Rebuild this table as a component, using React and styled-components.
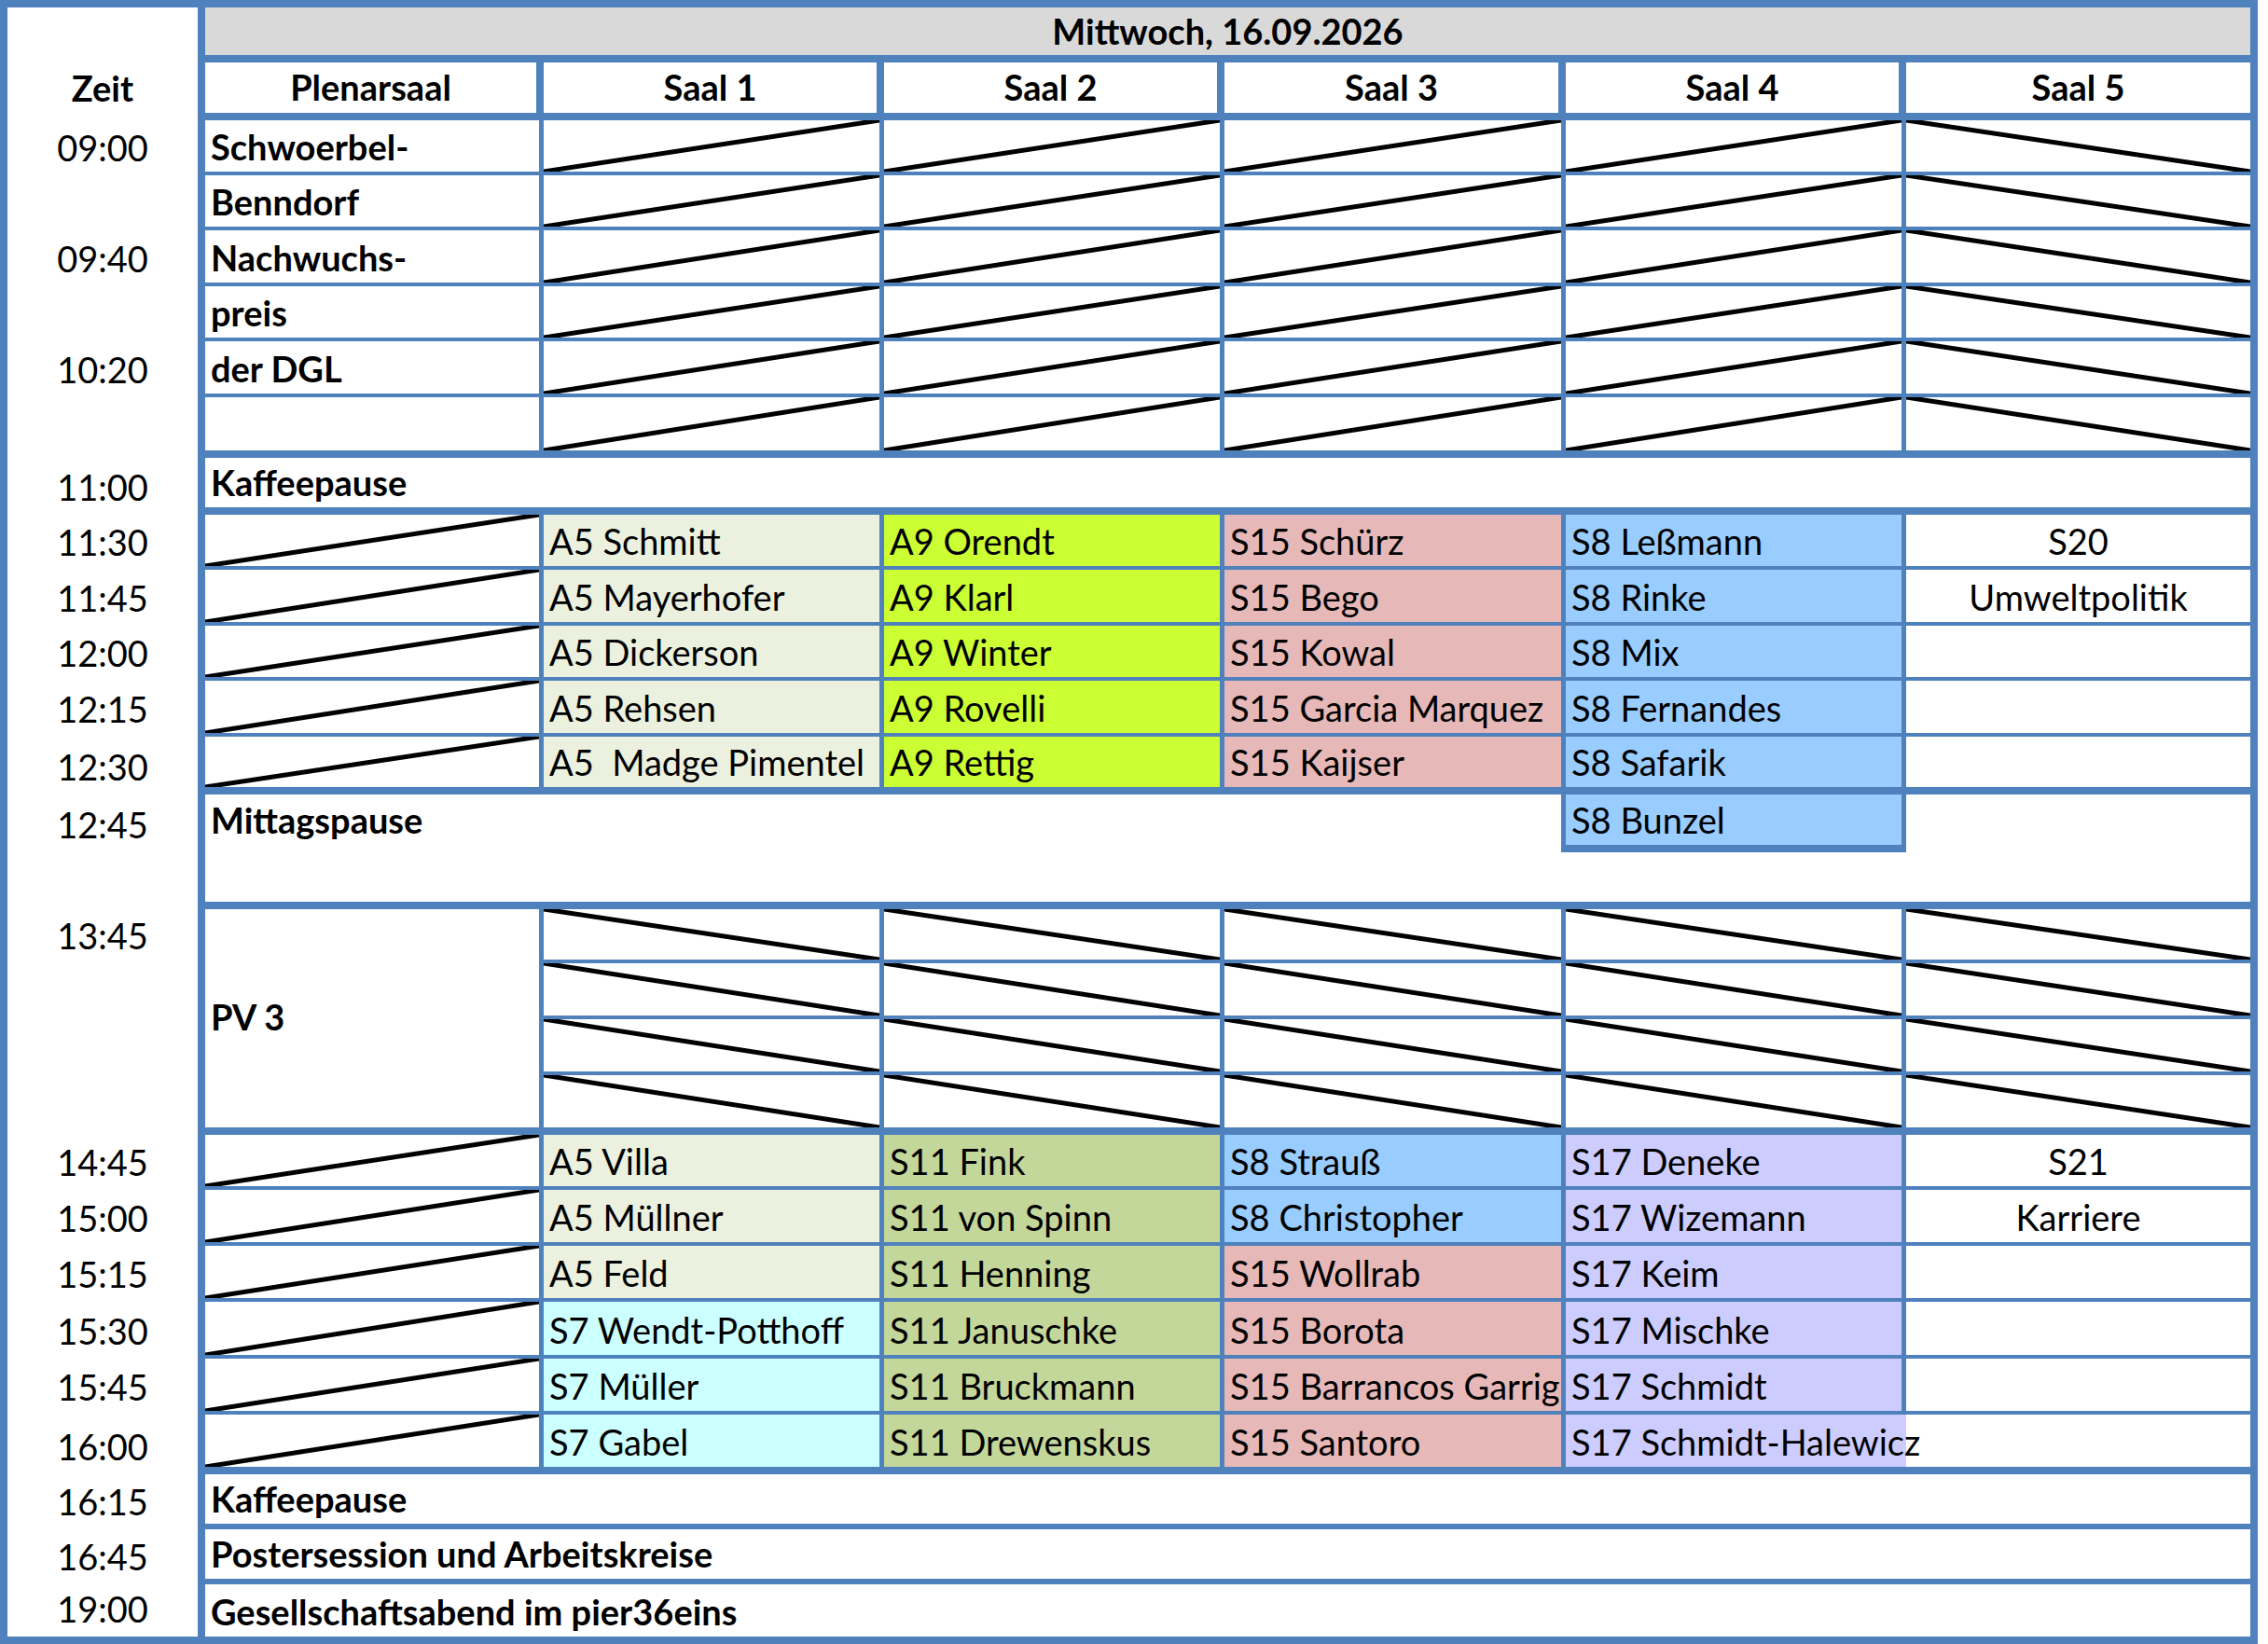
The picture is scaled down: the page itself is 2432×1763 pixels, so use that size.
import React from "react";
import styled, { createGlobalStyle, css } from "styled-components";

const BLUE = "#4f81bd";
const THIN = 4;
const THICK = 8;
const COL_LINE = 5;

const COLORS = {
  A5: "#ebf1de",
  A9: "#ccff33",
  S15: "#e6b8b7",
  S8: "#99ccff",
  S11: "#c4d79b",
  S7: "#ccffff",
  S17: "#ccccff",
};

// heights of the 29 sheet rows, borders included
const ROW_HEIGHTS = [
  59, 62, 59, 59, 60, 59, 60, 65, 61, 59, 60, 59, 60, 62, 62, 61, 58, 60, 60, 64,
  59, 60, 60, 61, 60, 64, 59, 59, 56,
];

const THICK_ROWS = [1, 2, 8, 9, 14, 16, 20, 26];

const bottomFor = (r) => {
  if (r === 29) return 0;
  if (r === 27 || r === 28) return 6;
  return THICK_ROWS.includes(r) ? THICK : THIN;
};

const TIMES = {
  2: "Zeit",
  3: "09:00",
  5: "09:40",
  7: "10:20",
  9: "11:00",
  10: "11:30",
  11: "11:45",
  12: "12:00",
  13: "12:15",
  14: "12:30",
  15: "12:45",
  17: "13:45",
  21: "14:45",
  22: "15:00",
  23: "15:15",
  24: "15:30",
  25: "15:45",
  26: "16:00",
  27: "16:15",
  28: "16:45",
  29: "19:00",
};

const ROOMS = ["Plenarsaal", "Saal 1", "Saal 2", "Saal 3", "Saal 4", "Saal 5"];

const PLENUM_MORNING = ["Schwoerbel-", "Benndorf", "Nachwuchs-", "preis", "der DGL", ""];

// session blocks: one array per room column (Saal 1 - Saal 4)
const MIDDAY = [
  [["A5", "A5 Schmitt"], ["A5", "A5 Mayerhofer"], ["A5", "A5 Dickerson"], ["A5", "A5 Rehsen"], ["A5", "A5  Madge Pimentel"]],
  [["A9", "A9 Orendt"], ["A9", "A9 Klarl"], ["A9", "A9 Winter"], ["A9", "A9 Rovelli"], ["A9", "A9 Rettig"]],
  [["S15", "S15 Schürz"], ["S15", "S15 Bego"], ["S15", "S15 Kowal"], ["S15", "S15 Garcia Marquez"], ["S15", "S15 Kaijser"]],
  [["S8", "S8 Leßmann"], ["S8", "S8 Rinke"], ["S8", "S8 Mix"], ["S8", "S8 Fernandes"], ["S8", "S8 Safarik"]],
];
const MIDDAY_SAAL5 = ["S20", "Umweltpolitik", "", "", ""];

const AFTERNOON = [
  [["A5", "A5 Villa"], ["A5", "A5 Müllner"], ["A5", "A5 Feld"], ["S7", "S7 Wendt-Potthoff"], ["S7", "S7 Müller"], ["S7", "S7 Gabel"]],
  [["S11", "S11 Fink"], ["S11", "S11 von Spinn"], ["S11", "S11 Henning"], ["S11", "S11 Januschke"], ["S11", "S11 Bruckmann"], ["S11", "S11 Drewenskus"]],
  [["S8", "S8 Strauß"], ["S8", "S8 Christopher"], ["S15", "S15 Wollrab"], ["S15", "S15 Borota"], ["S15", "S15 Barrancos Garrig"], ["S15", "S15 Santoro"]],
  [["S17", "S17 Deneke"], ["S17", "S17 Wizemann"], ["S17", "S17 Keim"], ["S17", "S17 Mischke"], ["S17", "S17 Schmidt"], ["S17", "S17 Schmidt-Halewicz"]],
];
const AFTERNOON_SAAL5 = ["S21", "Karriere", "", "", "", ""];

const GlobalStyle = createGlobalStyle`
  html, body {
    margin: 0;
    padding: 0;
    background: #fff;
    overflow: hidden;
  }
`;

const Sheet = styled.div`
  box-sizing: border-box;
  width: 2421px;
  height: 1763px;
  border: ${THICK}px solid ${BLUE};
  display: grid;
  grid-template-columns: 212px 363px 365px 365px 366px 365px 369px;
  grid-template-rows: ${ROW_HEIGHTS.map((h) => `${h}px`).join(" ")};
  background: #fff;
  color: #000;
  font-family: Lato, "Open Sans", sans-serif;
  font-size: 38px;
  line-height: 1.2;
`;

const slashLine = (dir) => css`
  background-image: linear-gradient(
    ${dir === "up" ? "to bottom right" : "to top right"},
    transparent calc(50% - 3px),
    #000 calc(50% - 2px),
    #000 calc(50% + 2px),
    transparent calc(50% + 3px)
  );
  background-repeat: no-repeat;
`;

const Cell = styled.div`
  box-sizing: border-box;
  min-width: 0;
  grid-row: ${(p) => p.$r} / span ${(p) => p.$rs || 1};
  grid-column: ${(p) => p.$c} / span ${(p) => p.$cs || 1};
  display: flex;
  align-items: ${(p) => (p.$middle ? "center" : "flex-end")};
  justify-content: ${(p) => (p.$center ? "center" : "flex-start")};
  padding: 0 0 3px ${(p) => (p.$center ? 0 : 6)}px;
  border-style: solid;
  border-color: ${BLUE};
  border-width: 0 ${(p) => (p.$open ? 0 : p.$right ?? COL_LINE)}px ${(p) => p.$bottom ?? THIN}px 0;
  background-color: ${(p) => p.$bg || "transparent"};
  background-clip: padding-box;
  font-weight: ${(p) => (p.$bold ? 700 : 400)};
  white-space: pre;
  overflow: ${(p) => (p.$open ? "visible" : "hidden")};
  ${(p) => p.$slash && slashLine(p.$slash)}
`;

const TimeCell = styled(Cell).attrs({ $c: 1, $right: THICK, $bottom: 0, $center: true })`
  padding-bottom: 6px;
`;

const HeadCell = styled(Cell).attrs({ $bold: true, $center: true, $middle: true, $bottom: THICK })`
  padding-bottom: 0;
`;

const DateCell = styled(HeadCell)`
  background-color: #d9d9d9;
`;

const BreakCell = styled(Cell).attrs({ $c: 2, $cs: 6, $right: 0, $bold: true })``;

// the lunch label shares its row with the boxed "S8 Bunzel" cell but has no bottom line
const LunchCell = styled(Cell).attrs({ $c: 2, $cs: 4, $bottom: 0, $bold: true })`
  padding-bottom: ${3 + THICK}px;
`;

function sessionBlock(startRow, columns, saal5) {
  const cells = [];
  saal5.forEach((_, i) => {
    const r = startRow + i;
    cells.push(<Cell key={`p${r}`} $r={r} $c={2} $bottom={bottomFor(r)} $slash="up" />);
    columns.forEach((col, ci) => {
      const [code, label] = col[i];
      const spill = label === "S17 Schmidt-Halewicz";
      cells.push(
        <Cell key={`s${r}-${ci}`} $r={r} $c={3 + ci} $bottom={bottomFor(r)} $bg={COLORS[code]} $open={spill}>
          {label}
        </Cell>
      );
    });
    cells.push(
      <Cell key={`x${r}`} $r={r} $c={7} $right={0} $bottom={bottomFor(r)} $center>
        {saal5[i]}
      </Cell>
    );
  });
  return cells;
}

function App() {
  const rows = ROW_HEIGHTS.map((_, i) => i + 1);

  return (
    <>
      <GlobalStyle />
      <Sheet>
        {rows.map((r) => (
          <TimeCell key={`t${r}`} $r={r} $bold={r === 2} $middle={r === 2}>
            {TIMES[r] || ""}
          </TimeCell>
        ))}

        <DateCell $r={1} $c={2} $cs={6} $right={0}>
          Mittwoch, 16.09.2026
        </DateCell>
        {ROOMS.map((room, i) => (
          <HeadCell key={room} $r={2} $c={2 + i} $right={i === 5 ? 0 : THICK}>
            {room}
          </HeadCell>
        ))}

        {/* 09:00 - 11:00 */}
        {PLENUM_MORNING.map((text, i) => {
          const r = 3 + i;
          return (
            <React.Fragment key={`m${r}`}>
              <Cell $r={r} $c={2} $bottom={bottomFor(r)} $bold>
                {text}
              </Cell>
              {[3, 4, 5, 6].map((c) => (
                <Cell key={c} $r={r} $c={c} $bottom={bottomFor(r)} $slash="up" />
              ))}
              <Cell $r={r} $c={7} $right={0} $bottom={bottomFor(r)} $slash="down" />
            </React.Fragment>
          );
        })}

        <BreakCell $r={9} $bottom={THICK}>Kaffeepause</BreakCell>

        {sessionBlock(10, MIDDAY, MIDDAY_SAAL5)}

        {/* Mittagspause */}
        <LunchCell $r={15}>Mittagspause</LunchCell>
        <Cell $r={15} $c={6} $bottom={THICK} $bg={COLORS.S8}>
          S8 Bunzel
        </Cell>
        <Cell $r={15} $c={7} $right={0} $bottom={0} />
        <Cell $r={16} $c={2} $cs={6} $right={0} $bottom={THICK} />

        {/* PV 3 */}
        <Cell $r={17} $rs={4} $c={2} $bottom={THICK} $bold $middle>
          PV 3
        </Cell>
        {[17, 18, 19, 20].map((r) =>
          [3, 4, 5, 6, 7].map((c) => (
            <Cell
              key={`pv${r}-${c}`}
              $r={r}
              $c={c}
              $right={c === 7 ? 0 : COL_LINE}
              $bottom={bottomFor(r)}
              $slash="down"
            />
          ))
        )}

        {sessionBlock(21, AFTERNOON, AFTERNOON_SAAL5)}

        <BreakCell $r={27} $bottom={bottomFor(27)}>Kaffeepause</BreakCell>
        <BreakCell $r={28} $bottom={bottomFor(28)}>Postersession und Arbeitskreise</BreakCell>
        <BreakCell $r={29} $bottom={0}>Gesellschaftsabend im pier36eins</BreakCell>
      </Sheet>
    </>
  );
}

export default App;
